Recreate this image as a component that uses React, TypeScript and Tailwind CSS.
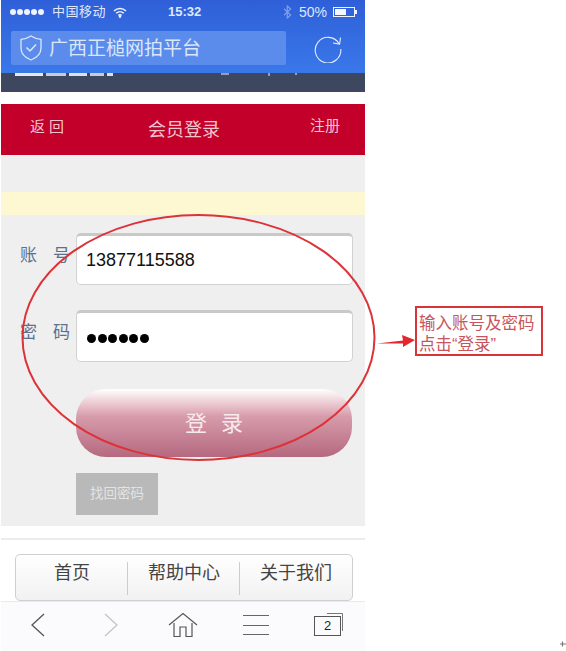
const cjk = "font-['Liberation_Sans','Noto_Sans_CJK_SC',sans-serif]";

const StatusBar = () => (
  <div className="flex h-[24px] items-center text-[#dfe8fb] text-[13px] pl-[9px] pr-[5px]">
    <div className="flex gap-[1px]">
      {[0, 1, 2, 3, 4].map(i => (
        <span key={i} className="w-[6px] h-[6px] rounded-full bg-[#eef3ff]" />
      ))}
    </div>
    <span className="ml-[8px] w-[56px] text-[13px] tracking-[0.5px]">中国移动</span>
    <svg className="ml-[5px]" width="14" height="11" viewBox="0 0 14 11" fill="none" stroke="#eef3ff" strokeWidth="1.5">
      <path d="M1 4 C4.5 0.6 9.5 0.6 13 4" />
      <path d="M3.2 6.2 C5.4 4.2 8.6 4.2 10.8 6.2" />
      <path d="M5.4 8.4 C6.4 7.6 7.6 7.6 8.6 8.4" />
      <circle cx="7" cy="9.6" r="0.6" fill="#eef3ff" />
    </svg>
    <span className="ml-[41px] w-[40px] text-[13px] font-semibold">15:32</span>
    <svg className="ml-[75px]" width="9" height="14" viewBox="0 0 9 14" fill="none" stroke="#7f9fe6" strokeWidth="1.2">
      <path d="M1 3.8 L7.6 10 L4.3 13 V1 L7.6 4 L1 10.2" />
    </svg>
    <span className="ml-[7px] w-[29px] text-[14px]">50%</span>
    <div className="ml-[5px] flex items-center">
      <div className="w-[22px] h-[10px] border border-[#eef3ff] p-[1px]">
        <div className="w-[11px] h-full bg-[#f4f7ff]" />
      </div>
      <div className="w-[1.5px] h-[4px] bg-[#eef3ff]" />
    </div>
  </div>
);

const AddressBar = () => (
  <div className="flex items-start pl-[10px] pt-[7px]">
    <div className="flex items-center w-[275px] h-[34px] rounded-[2px] bg-[#5b8cec] pl-[8px]">
      <svg width="24" height="28" viewBox="0 0 24 28" fill="none" stroke="#dce7fb" strokeWidth="1.3">
        <path d="M12 2 C9 4 6 5 2 5.3 V14 C2 20 7 24 12 26 C17 24 22 20 22 14 V5.3 C18 5 15 4 12 2 Z" />
        <path d="M7.5 13.5 L11 17 L17 10.5" strokeWidth="1.5" />
      </svg>
      <span className="ml-[6px] text-[19px] text-[#dbe6fb] leading-none">广西正槌网拍平台</span>
    </div>
    <svg className="ml-[27px] mt-[2px]" width="30" height="30" viewBox="0 0 30 30" fill="none" stroke="#e6eefc" strokeWidth="1.1">
      <path d="M26 10.5 A12.8 12.8 0 1 0 27.8 16" />
      <path d="M27.5 4.5 L26.6 11 L20 10" />
    </svg>
  </div>
);

const Field = ({ label, children, className }: { label: string[]; children: React.ReactNode; className?: string }) => (
  <div className={`flex items-center ${className ?? ''}`}>
    <div className="w-[75px] flex justify-between pl-[19px] pr-[6px] text-[17px] text-[#5d6f8c] -translate-y-[3px]">
      <span>{label[0]}</span>
      <span>{label[1]}</span>
    </div>
    <div className="w-[277px] h-[52px] rounded-[5px] border border-[#d2d2d2] border-t-[3px] border-t-[#c9c9c9] bg-white flex items-center pl-[9px] text-[18px] text-[#111]">
      {children}
    </div>
  </div>
);

const ToolbarIcons = () => (
  <div className="flex items-center h-[50px] pb-[3px] bg-[#fbfbfd] border-t border-[#eaeaea]">
    <svg className="ml-[29px]" width="16" height="26" viewBox="0 0 16 26" fill="none" stroke="#555" strokeWidth="1.3">
      <path d="M14 2 L2 13 L14 24" />
    </svg>
    <svg className="ml-[57px]" width="16" height="26" viewBox="0 0 16 26" fill="none" stroke="#c4c4c4" strokeWidth="1.3">
      <path d="M2 2 L14 13 L2 24" />
    </svg>
    <svg className="ml-[49px]" width="30" height="26" viewBox="0 0 30 26" fill="none" stroke="#555" strokeWidth="1.2">
      <path d="M1 13 L15 1.5 L29 13" />
      <path d="M6 11 V24.5 H12 V15 H18 V24.5 H24 V11" />
    </svg>
    <div className="ml-[45px] w-[26px] h-[20px] flex flex-col justify-between">
      <div className="h-[1px] bg-[#666]" />
      <div className="h-[1px] bg-[#666]" />
      <div className="h-[1px] bg-[#666]" />
    </div>
    <div className="relative ml-[45px] mt-[2px] w-[27px] h-[20px] border border-[#555] flex items-center justify-center text-[13px] text-[#222]">
      2
      <svg className="absolute -top-[5px] -right-[4px]" width="18" height="20" viewBox="0 0 18 20" fill="none" stroke="#777">
        <path d="M1 1.5 H16.5 V19" />
      </svg>
    </div>
  </div>
);

const FooterCell = ({ text, divider }: { text: string; divider?: boolean }) => (
  <div className="flex-1 relative flex justify-center pt-[5px]">
    {text}
    {divider && <div className="absolute right-0 top-[7px] h-[33px] w-[1px] bg-[#cccccc]" />}
  </div>
);

export default function App() {
  return (
    <div className={`relative w-[566px] h-[651px] overflow-hidden bg-white ${cjk}`}>
      <div className="w-[364px] ml-[1px] flex flex-col">
        {/* 浏览器顶部 */}
        <div className="h-[73px] bg-gradient-to-b from-[#2f5fd8] to-[#3a78ea]">
          <StatusBar />
          <AddressBar />
        </div>
        <div className="h-[19px] bg-[#3d4760] flex items-start gap-[3px] pl-[14px]">
          <div className="w-[28px] h-[3px] bg-[#e8e8ea]" />
          <div className="w-[20px] h-[3px] bg-[#c9ccd4]" />
          <div className="w-[18px] h-[3px] bg-[#e0e1e6]" />
          <div className="w-[14px] h-[3px] bg-[#c9ccd4]" />
          <div className="w-[6px] h-[3px] bg-[#e0e1e6]" />
          <div className="ml-[105px] w-[8px] h-[2px] bg-[#9aa0b0]" />
          <div className="ml-[36px] w-[2px] h-[3px] bg-[#9aa0b0]" />
          <div className="ml-[22px] w-[2px] h-[2px] bg-[#9aa0b0]" />
        </div>
        <div className="h-[12px]" />

        {/* 页面标题 */}
        <div className="h-[51px] bg-[#c2002a] flex items-start text-[#f3c4cf]">
          <span className="ml-[29px] mt-[12px] text-[15px] tracking-[4px]">返回</span>
          <span className="ml-[80px] mt-[13px] text-[18px]">会员登录</span>
          <span className="ml-auto mr-[25px] mt-[11px] text-[15px]">注册</span>
        </div>
        <div className="h-[37px] bg-[#efefef]" />
        <div className="h-[23px] bg-[#fdf8d2]" />

        {/* 表单 */}
        <div className="h-[311px] bg-[#efefef] pt-[18px]">
          <Field label={['账', '号']}>13877115588</Field>
          <Field label={['密', '码']} className="mt-[25px]">
            <div className="flex gap-[1.5px] ml-[1px] translate-y-[1px]">
              {[0, 1, 2, 3, 4, 5].map(i => (
                <span key={i} className="w-[9px] h-[9px] rounded-full bg-black" />
              ))}
            </div>
          </Field>
          <div className="ml-[75px] mt-[27px] w-[276px] h-[68px] rounded-[30px] bg-gradient-to-b from-[#ffffff] via-[#d79cab] via-40% to-[#b5697f] flex items-center justify-center text-[22px] text-[#f7e9ec] tracking-[14px] pl-[14px]">
            登录
          </div>
          <div className="ml-[75px] mt-[16px] w-[82px] h-[42px] bg-[#b9b9b9] flex items-center justify-center text-[13.5px] text-[#e3e3e3]">
            找回密码
          </div>
        </div>

        <div className="h-[12px]" />
        <div className="h-[2px] bg-[#ececec]" />
        <div className="h-[14px]" />

        {/* 底部导航 */}
        <div className="mx-[14px] w-[338px] h-[47px] rounded-[5px] border border-[#cfcfcf] bg-gradient-to-b from-[#ffffff] to-[#f1f1f1] flex text-[18px] text-[#444]">
          <FooterCell text="首页" divider />
          <FooterCell text="帮助中心" divider />
          <FooterCell text="关于我们" />
        </div>
        <ToolbarIcons />
      </div>

      {/* 标注层 */}
      <svg className="absolute left-[20px] top-[213px]" width="358" height="250" viewBox="0 0 358 250" fill="none">
        <ellipse cx="178.5" cy="124.5" rx="176" ry="122.5" stroke="#dc3238" strokeWidth="2" />
      </svg>
      <svg className="absolute left-[376px] top-[330px]" width="40" height="20" viewBox="0 0 40 20">
        <path d="M1 13.5 L27 10.5 L26 5 L39 10 L27 17 L27 13.5 Z" fill="#e2282e" />
      </svg>
      <div className="absolute left-[415px] top-[306px] w-[128px] h-[50px] border-2 border-[#d8353a] bg-white pl-[2px] pt-[5px] text-[16.5px] leading-[21px] text-[#c8555d] whitespace-nowrap">
        <div>输入账号及密码</div>
        <div>点击“登录”</div>
      </div>
      <svg className="absolute left-[559px] top-[640px]" width="8" height="8" viewBox="0 0 8 8" fill="none" stroke="#777" strokeWidth="1.2">
        <path d="M1 4 H7 M3.5 1.5 V6.5" />
      </svg>
    </div>
  );
}
